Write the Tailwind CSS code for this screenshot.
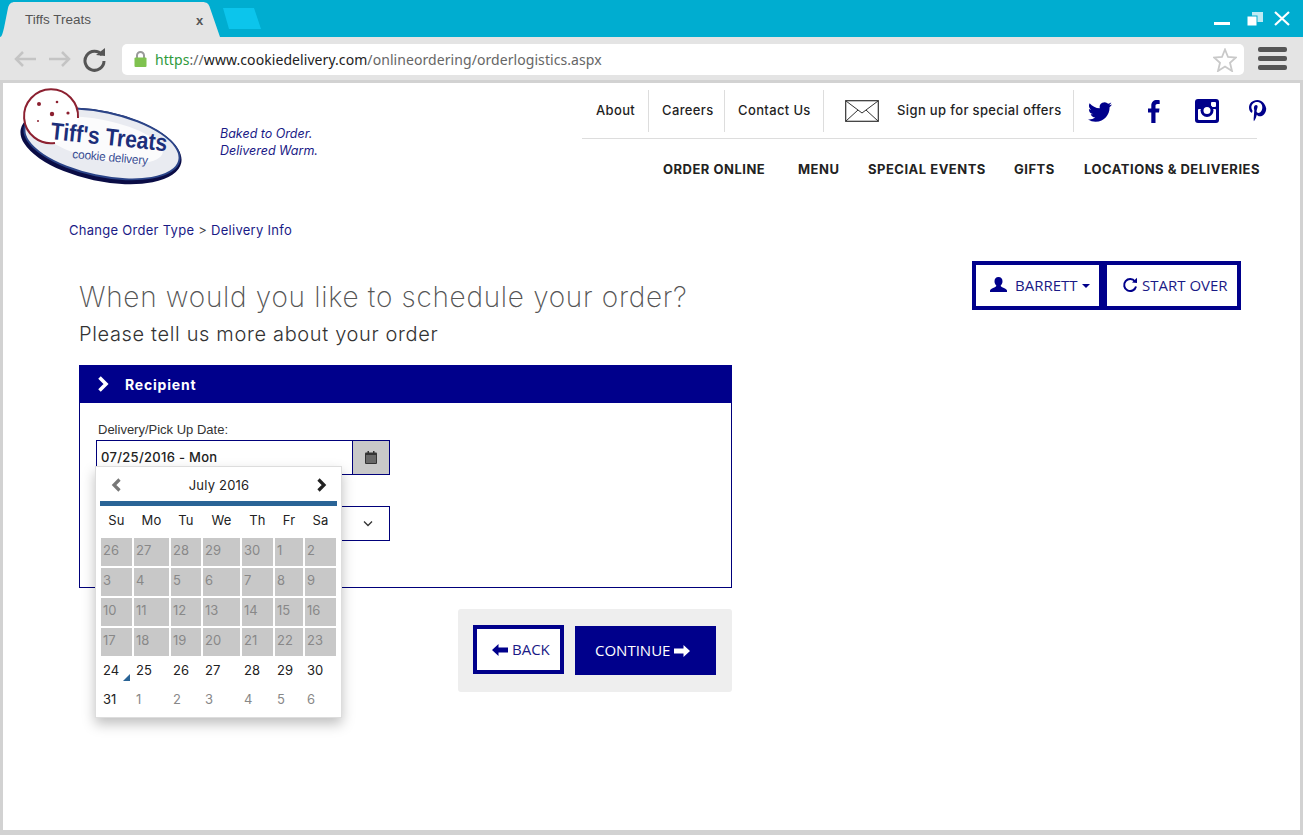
<!DOCTYPE html>
<html lang="en">
  <head>
    <meta charset="UTF-8" />
    <title>Tiffs Treats</title>
    <script src="https://cdn.jsdelivr.net/npm/@tailwindcss/browser@4"></script>
  </head>
  <body class="w-[1303px] h-[835px] overflow-hidden bg-white font-['Inter',sans-serif] relative">
    <!-- browser title bar -->
    <div class="h-[37px] bg-[#00add0] relative">
      <svg class="absolute left-0 top-0" width="270" height="38" viewBox="0 0 270 38">
        <path d="M0 37 C2 37 3 32 4 28 L8 8 C9 4 11 2 15 2 L202 2 C207 2 209 4 210 8 L220 37 Z" fill="#e4e4e4" />
        <path d="M223 8 L254 8 L261 29 L229 29 Z" fill="#0cc5ec" />
      </svg>
      <span class="absolute left-[25px] top-[12px] text-[13.5px] leading-[15px] text-[#555] font-['Liberation_Sans',sans-serif]">Tiffs Treats</span>
      <span class="absolute left-[196px] top-[13px] text-[13px] leading-[15px] font-bold text-[#555] font-['Liberation_Sans',sans-serif]">x</span>
      <svg class="absolute left-[1213px] top-[9px]" width="80" height="20" viewBox="0 0 80 20">
        <rect x="1" y="13" width="16" height="3" fill="#fff" />
        <rect x="39" y="3" width="11" height="10" fill="#fff" opacity=".75" />
        <rect x="34" y="7" width="10" height="10" fill="#fff" stroke="#00add0" stroke-width="1" />
        <path d="M62 3 L76 16 M76 3 L62 16" stroke="#fff" stroke-width="2.200" />
      </svg>
    </div>

    <!-- browser toolbar -->
    <div class="h-[43px] bg-[#e4e4e4] border-b-[3px] border-[#d2d2d2] box-content flex items-center relative">
      <svg class="ml-[14px]" width="96" height="26" viewBox="0 0 96 26">
        <path d="M2 13 H22 M9 6 L2 13 L9 20" fill="none" stroke="#c4c4c4" stroke-width="2.500" />
        <path d="M35 13 H55 M48 6 L55 13 L48 20" fill="none" stroke="#c4c4c4" stroke-width="2.500" />
        <path d="M88 9 A9.500 9.500 0 1 0 90 15" fill="none" stroke="#555" stroke-width="3" />
        <path d="M82 9 L91 10 L91 2 Z" fill="#555" />
      </svg>
      <div class="absolute left-[122px] top-[7px] w-[1122px] h-[31px] bg-white rounded-[5px] flex items-center pl-[11px]">
        <svg width="15" height="18" viewBox="0 0 15 18" class="mr-[7px] -mt-[1px]">
          <path d="M4 8 V5.500 a3.500 3.500 0 0 1 7 0 V8" fill="none" stroke="#9a9a9a" stroke-width="2" />
          <rect x="1.500" y="7.500" width="12" height="9.500" rx="1" fill="#7fc24f" />
        </svg>
        <span class="text-[14px] tracking-[0.07px] font-['Noto_Sans','Open_Sans',sans-serif] whitespace-nowrap"><span class="text-[#2f9a3c]">https</span><span class="text-[#666]">://</span><span class="text-[#222]">www.cookiedelivery.com</span><span class="text-[#666]">/onlineordering/orderlogistics.aspx</span></span>
        <svg class="absolute right-[7px] top-[4px]" width="24" height="24" viewBox="0 0 24 24">
          <path d="M12 1.500 L15 9 L23 9.500 L17 14.800 L19 23 L12 18.500 L5 23 L7 14.800 L1 9.500 L9 9 Z" fill="#fff" stroke="#c9c9c9" stroke-width="1.800" />
        </svg>
      </div>
      <div class="absolute left-[1258px] top-[10px] flex flex-col gap-[4px]">
        <div class="w-[29px] h-[5px] rounded-[2px] bg-[#555]"></div>
        <div class="w-[29px] h-[5px] rounded-[2px] bg-[#555]"></div>
        <div class="w-[29px] h-[5px] rounded-[2px] bg-[#555]"></div>
      </div>
    </div>

    <!-- page -->
    <div class="h-[752px] border-x-[3px] border-b-[5px] border-[#d2d2d2] bg-white relative">
      <!-- site header -->
      <header class="flex h-[105px]">
        <svg class="ml-[14px] mt-[2px] shrink-0" width="170" height="102" viewBox="0 0 170 102">
          <ellipse cx="84" cy="61" rx="82" ry="35" transform="rotate(12 84 61)" fill="#0a0c45" />
          <ellipse cx="85" cy="59" rx="80" ry="33" transform="rotate(12 85 59)" fill="#2b4488" />
          <ellipse cx="85" cy="59" rx="78" ry="31" transform="rotate(12 85 59)" fill="#e9ebf1" />
          <ellipse cx="85" cy="55" rx="62" ry="20" transform="rotate(12 85 55)" fill="#fbfbfc" />
          <circle cx="34" cy="31" r="27" fill="#fff" />
          <path d="M38 58 A27 27 0 1 1 61 33" fill="none" stroke="#8c2030" stroke-width="2" />
          <g fill="#8c2030">
            <circle cx="22" cy="19" r="2" /><circle cx="40" cy="17" r="1.300" /><circle cx="35" cy="29" r="2.200" /><circle cx="51" cy="28" r="1.600" /><circle cx="21" cy="36" r="1" />
          </g>
          <text x="33" y="54" transform="rotate(6 33 54)" font-family="'Liberation Sans',sans-serif" font-weight="700" font-size="24" fill="#1c2f7a" textLength="117" lengthAdjust="spacingAndGlyphs">Tiff's Treats</text>
          <text x="55" y="73" transform="rotate(5 55 73)" font-family="'Liberation Sans',sans-serif" font-size="12" fill="#3a4f94" textLength="76">cookie delivery</text>
        </svg>
        <div class="ml-[33px] mt-[42px] text-[12.500px] leading-[17px] italic text-[#1a1a86] w-[120px] shrink-0">Baked to Order.<br />Delivered Warm.</div>
        <div class="ml-[242px] w-[675px] shrink-0">
          <div class="h-[54px] mt-[2px] pb-[1px] flex items-center border-b border-[#ddd] pl-[14px] text-[13px] font-medium text-[#1f1f1f] tracking-[0.35px]">
            <span class="w-[40px] whitespace-nowrap">About</span>
            <span class="w-[1px] shrink-0 h-[42px] bg-[#ddd] ml-[13px] mr-[13px]"></span>
            <span class="w-[50px] whitespace-nowrap">Careers</span>
            <span class="w-[1px] shrink-0 h-[42px] bg-[#ddd] ml-[12px] mr-[13px]"></span>
            <span class="w-[72px] whitespace-nowrap">Contact Us</span>
            <span class="w-[1px] shrink-0 h-[42px] bg-[#ddd] ml-[13px] mr-[21px]"></span>
            <svg width="34" height="22" viewBox="0 0 34 22" class="shrink-0">
              <rect x=".7" y=".7" width="32.600" height="20.600" fill="#fff" stroke="#333" stroke-width="1.200" />
              <path d="M1 1 L17 13 L33 1 M1 21 L13 10 M33 21 L21 10" fill="none" stroke="#333" stroke-width="1" />
            </svg>
            <span class="ml-[18px] w-[163px] whitespace-nowrap">Sign up for special offers</span>
            <span class="w-[1px] shrink-0 h-[42px] bg-[#ddd] ml-[13px] mr-[14px]"></span>
            <svg width="24" height="24" viewBox="0 0 24 24" fill="#00008b" class="shrink-0 mt-[2px]"><path d="M23.953 4.570a10 10 0 01-2.825.775 4.958 4.958 0 002.163-2.723c-.951.555-2.005.959-3.127 1.184a4.920 4.920 0 00-8.384 4.482C7.690 8.095 4.067 6.130 1.640 3.162a4.822 4.822 0 00-.666 2.475c0 1.710.870 3.213 2.188 4.096a4.904 4.904 0 01-2.228-.616v.060a4.923 4.923 0 003.946 4.827 4.996 4.996 0 01-2.212.085 4.936 4.936 0 004.604 3.417 9.867 9.867 0 01-6.102 2.105c-.390 0-.779-.023-1.170-.067a13.995 13.995 0 007.557 2.209c9.053 0 13.998-7.496 13.998-13.985 0-.210 0-.420-.015-.630A9.935 9.935 0 0024 4.590z" /></svg>
            <svg width="24" height="24" viewBox="0 0 24 24" fill="#00008b" class="shrink-0 ml-[29px]"><path d="M14.500 24v-10.500h3.500l.500-4h-4V7c0-1.200.400-2 2.100-2h2.100V1.200C18.300 1.100 17.100 1 15.800 1 12.600 1 10.300 3 10.300 6.600v2.900H7v4h3.300V24z" /></svg>
            <svg width="24" height="24" viewBox="0 0 24 24" class="shrink-0 ml-[30px]">
              <rect width="24" height="24" rx="3" fill="#00008b" />
              <rect x="3" y="10" width="18" height="11" rx="1" fill="#fff" />
              <rect x="16" y="3" width="5" height="5" rx="1" fill="#fff" />
              <circle cx="12" cy="11.500" r="6.500" fill="#00008b" />
              <circle cx="12" cy="11.500" r="3.500" fill="#fff" />
            </svg>
            <svg width="24" height="26" viewBox="0 0 24 24" fill="#00008b" class="shrink-0 ml-[26px]"><path d="M12.500 1C7 1 4 4.700 4 8.700c0 1.900 1 4.200 2.600 5 .3.100.4.100.5-.2l.4-1.600c0-.2 0-.3-.1-.5-.5-.7-1-1.800-1-2.900 0-2.800 2.100-5.400 5.700-5.400 3.100 0 5.200 2.100 5.200 5.100 0 3.400-1.700 5.700-3.900 5.700-1.200 0-2.100-1-1.800-2.200.3-1.500 1-3 1-4 0-.9-.5-1.700-1.500-1.700-1.200 0-2.200 1.300-2.200 3 0 1.100.4 1.800.4 1.800L8.800 18c-.3 1.200-.1 3.200 0 4 0 .2.200.2.300.1.3-.4 1.500-2 1.900-3.500l.8-2.900c.4.800 1.600 1.500 2.900 1.500 3.800 0 6.500-3.500 6.500-7.800C20.300 5 16.900 1 12.500 1z" /></svg>
          </div>
          <nav class="mt-[22px] pl-[81px] flex gap-[30px] text-[13px] leading-[16px] font-bold text-[#222] tracking-[0.5px] whitespace-nowrap">
            <span class="w-[105px] shrink-0">ORDER ONLINE</span><span class="w-[40px] shrink-0">MENU</span><span class="w-[116px] shrink-0">SPECIAL EVENTS</span><span class="w-[40px] shrink-0">GIFTS</span><span class="w-[177px] shrink-0">LOCATIONS &amp; DELIVERIES</span>
          </nav>
        </div>
      </header>

      <!-- main -->
      <main class="pl-[66px] pt-[34px] relative">
        <p class="text-[13px] leading-[16px] tracking-[0.28px] text-[#1a1a86]">Change Order Type <span class="text-[#444]">&gt;</span> Delivery Info</p>
        <div class="absolute left-[969px] top-[73px] w-[269px] h-[49px] border-[4px] border-[#00008b] flex text-[15px] text-[#1a1a86] font-['Open_Sans',sans-serif]">
          <div class="w-[123px] flex items-center pl-[14px]">
            <svg width="17" height="16" viewBox="0 0 17 16" fill="#00008b" class="mr-[8px] -mt-[2px]"><path d="M8.500 0c2.600 0 4 1.900 4 4.300 0 2-.9 3.500-1.800 4.300 0 .8.400 1.200 1.500 1.600 2.500.9 4.300 1.700 4.800 3.300v1.500H0v-1.500c.5-1.600 2.300-2.400 4.800-3.300 1.100-.4 1.500-.8 1.500-1.600C5.400 7.800 4.500 6.300 4.500 4.300 4.500 1.900 5.900 0 8.500 0z" /></svg>
            <span>BARRETT</span>
            <span class="ml-[4px] border-x-[4px] border-x-transparent border-t-[4px] border-t-[#00008b]"></span>
          </div>
          <div class="w-[8px] bg-[#00008b]"></div>
          <div class="flex-1 flex items-center pl-[15px]">
            <svg width="16" height="16" viewBox="0 0 16 16" class="mr-[4px] -mt-[2px]"><path d="M13 4.500A6 6 0 1 0 14 9.500" fill="none" stroke="#00008b" stroke-width="2" /><path d="M10 5.500 L15 6 L15 0.800 Z" fill="#00008b" /></svg>
            <span class="whitespace-nowrap">START OVER</span>
          </div>
        </div>

        <h1 class="ml-[10px] mt-[42px] text-[28px] leading-[34px] font-extralight text-[#555] tracking-[0.7px] whitespace-nowrap">When would you like to schedule your order?</h1>
        <h2 class="ml-[10px] mt-[7px] text-[20px] leading-[26px] font-light text-[#333] tracking-[0.65px]">Please tell us more about your order</h2>

        <section class="ml-[10px] mt-[18px] w-[653px] h-[223px] border border-[#00007a]">
          <div class="h-[38px] -mx-px -mt-px bg-[#00008b] flex items-center pl-[18px] text-white text-[14px] font-bold tracking-[0.8px]">
            <svg width="12" height="16" viewBox="0 0 12 16" class="mr-[16px]"><path d="M2.500 1.500 L9 8 L2.500 14.500" fill="none" stroke="#fff" stroke-width="3.600" /></svg>
            Recipient
          </div>
          <div class="pl-[16px] pt-[19px]">
            <label class="block pl-[2px] text-[13px] leading-[15px] text-[#333] font-['Liberation_Sans',sans-serif]">Delivery/Pick Up Date:</label>
            <div class="mt-[3px] w-[294px] h-[35px] border border-[#00007a] flex">
              <div class="flex-1 pl-[4px] pt-[8px] text-[13px] leading-[16px] font-medium text-[#222] tracking-[0.3px]">07/25/2016 - Mon</div>
              <div class="w-[37px] bg-[#c8c8c8] border-l border-[#00007a] flex items-center justify-center">
                <svg width="12" height="13" viewBox="0 0 12 13" fill="#333"><rect y="1.500" width="12" height="11.500" rx="1" /><rect x="2.500" width="1.500" height="3" /><rect x="8" width="1.500" height="3" /><path d="M1 5h10M1 7h10M1 9h10M1 11h10" stroke="#c8c8c8" stroke-width=".7" /></svg>
              </div>
            </div>
            <div class="mt-[31px] w-[294px] h-[35px] border border-[#00007a] flex items-center justify-end pr-[16px]">
              <svg width="10" height="7" viewBox="0 0 10 7"><path d="M1 1.500 L5 5.500 L9 1.500" fill="none" stroke="#333" stroke-width="1.300" /></svg>
            </div>
          </div>
        </section>

        <div class="ml-[389px] mt-[21px] w-[274px] h-[83px] bg-[#eee] rounded-[3px] flex items-start pl-[15px] pt-[16px] font-['Open_Sans',sans-serif] text-[15px]">
          <div class="w-[91px] h-[49px] border-[4px] border-[#00008b] bg-white text-[#1a1a86] flex items-center pl-[15px]">
            <svg width="16" height="12" viewBox="0 0 16 12" fill="#00008b" class="mr-[4px]"><path d="M0 6 L6.500 0 V3.500 H16 V8.500 H6.500 V12 Z" /></svg>BACK
          </div>
          <div class="ml-[11px] w-[141px] h-[49px] mt-[1px] bg-[#00008b] text-white flex items-center pl-[20px]">
            CONTINUE
            <svg width="16" height="12" viewBox="0 0 16 12" fill="#fff" class="ml-[4px]"><path d="M16 6 L9.500 0 V3.500 H0 V8.500 H9.500 V12 Z" /></svg>
          </div>
        </div>

        <!-- date picker popup -->
        <div class="absolute left-[92px] top-[278px] w-[247px] h-[252px] bg-white border border-[#ddd] shadow-[0_6px_12px_rgba(0,0,0,0.25)] px-[4px] text-[13px] text-[#222]">
          <div class="h-[34px] flex items-center justify-between pl-[11px] pr-[10px]">
            <svg width="11" height="14" viewBox="0 0 11 14" class="mt-[1px]"><path d="M8.500 1.500 L3 7 L8.500 12.500" fill="none" stroke="#777" stroke-width="3.200" /></svg>
            <span class="mt-[3px] tracking-[0.2px]">July 2016</span>
            <svg width="11" height="14" viewBox="0 0 11 14" class="mt-[1px]"><path d="M2.500 1.500 L8 7 L2.500 12.500" fill="none" stroke="#222" stroke-width="3.200" /></svg>
          </div>
          <div class="h-[5px] bg-[#2a6496]"></div>
          <div class="mt-[6px] pl-px grid grid-cols-[31px_35px_30px_37px_31px_28px_31px] gap-x-[2px] text-center leading-[16px] tracking-[0.2px]">
            <span>Su</span><span>Mo</span><span>Tu</span><span>We</span><span>Th</span><span>Fr</span><span>Sa</span>
          </div>
          <div id="days" class="mt-[10px] pl-px grid grid-cols-[31px_35px_30px_37px_31px_28px_31px] grid-rows-[28px_28px_28px_28px_27px_26px] gap-[2px] leading-[25px]"></div>
          <div class="absolute left-[27px] top-[207px] w-0 h-0 border-l-[7px] border-l-transparent border-b-[7px] border-b-[#2a6496]"></div>
        </div>
      </main>
    </div>

    <script>
      // calendar cells: first 28 are disabled, then the open days, then next month
      const labels = [26,27,28,29,30,1,2,3,4,5,6,7,8,9,10,11,12,13,14,15,16,17,18,19,20,21,22,23,24,25,26,27,28,29,30,31,1,2,3,4,5,6];
      const days = document.getElementById("days");
      labels.forEach((n, i) => {
        const cell = document.createElement("span");
        if (i < 28) cell.className = "bg-[#c8c8c8] text-[#888] pl-[2px]";
        else if (i < 36) cell.className = "pl-[2px] text-[#222]";
        else cell.className = "pl-[2px] text-[#888]";
        cell.textContent = n;
        days.appendChild(cell);
      });
    </script>
  </body>
</html>
